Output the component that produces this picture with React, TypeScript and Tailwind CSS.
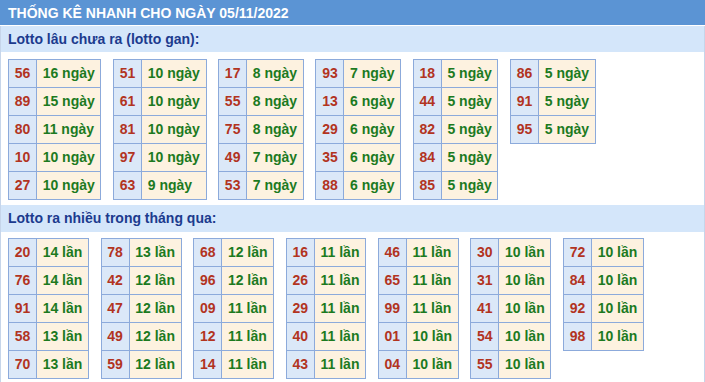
const ganTables: [string, number][][] = [
  [["56", 16], ["89", 15], ["80", 11], ["10", 10], ["27", 10]],
  [["51", 10], ["61", 10], ["81", 10], ["97", 10], ["63", 9]],
  [["17", 8], ["55", 8], ["75", 8], ["49", 7], ["53", 7]],
  [["93", 7], ["13", 6], ["29", 6], ["35", 6], ["88", 6]],
  [["18", 5], ["44", 5], ["82", 5], ["84", 5], ["85", 5]],
  [["86", 5], ["91", 5], ["95", 5]],
];

const frequentTables: [string, number][][] = [
  [["20", 14], ["76", 14], ["91", 14], ["58", 13], ["70", 13]],
  [["78", 13], ["42", 12], ["47", 12], ["49", 12], ["59", 12]],
  [["68", 12], ["96", 12], ["09", 11], ["12", 11], ["14", 11]],
  [["16", 11], ["26", 11], ["29", 11], ["40", 11], ["43", 11]],
  [["46", 11], ["65", 11], ["99", 11], ["01", 10], ["04", 10]],
  [["30", 10], ["31", 10], ["41", 10], ["54", 10], ["55", 10]],
  [["72", 10], ["84", 10], ["92", 10], ["98", 10]],
];

function LottoTable({ rows, unit }: { rows: [string, number][]; unit: string }) {
  return (
    <div className="flex flex-col border-l border-t border-[#8caadb] self-start">
      {rows.map(([num, count]) => (
        <div key={num} className="flex h-[28px]">
          <div className="flex items-center px-[5.7px] bg-[#dbe8f8] text-[#b2341f] border-r border-b border-[#8caadb]">
            {num}
          </div>
          <div className="flex items-center px-[5.7px] bg-[#fdf2e0] text-[#1c7a1f] border-r border-b border-[#8caadb] flex-1">
            {count} {unit}
          </div>
        </div>
      ))}
    </div>
  );
}

export default function App() {
  return (
    <div
      className="w-[705px] h-[382px] overflow-hidden bg-white text-[14px] font-bold"
      style={{ fontFamily: '"Liberation Sans", Arial, sans-serif' }}
    >
      <div className="h-[25px] bg-[#5b94d4] text-white flex items-center pl-2 leading-none">
        THỐNG KÊ NHANH CHO NGÀY 05/11/2022
      </div>
      <div className="border-x border-[#c6d5ea] h-[357px]">
        <div className="mt-[1px] h-[26px] bg-[#d4e6fa] text-[#1c3b8e] flex items-center pl-[7px]">
          Lotto lâu chưa ra (lotto gan):
        </div>
        <div className="flex gap-x-[11.6px] pl-[7px] pt-[7px]">
          {ganTables.map((t, i) => (
            <LottoTable key={i} rows={t} unit="ngày" />
          ))}
        </div>
        <div className="mt-[5px] h-[27px] bg-[#d4e6fa] text-[#1c3b8e] flex items-center pl-[7px]">
          Lotto ra nhiều trong tháng qua:
        </div>
        <div className="flex gap-x-[11.6px] pl-[7px] pt-[6px]">
          {frequentTables.map((t, i) => (
            <LottoTable key={i} rows={t} unit="lần" />
          ))}
        </div>
      </div>
    </div>
  );
}
